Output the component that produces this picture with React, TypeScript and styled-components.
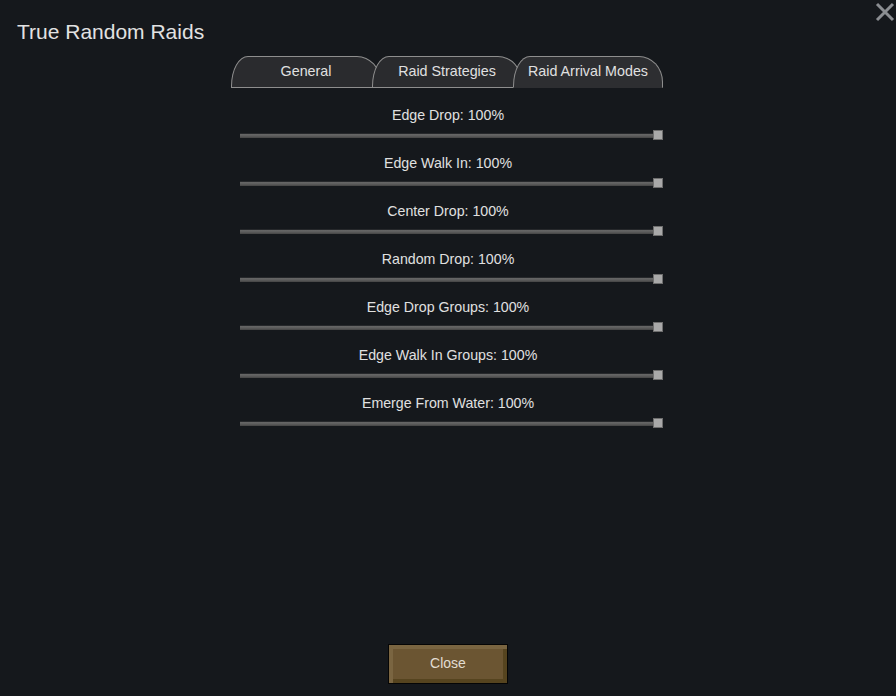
import styled, { createGlobalStyle } from 'styled-components';

const GlobalStyle = createGlobalStyle`
  html, body {
    margin: 0;
    padding: 0;
    background: #15181c;
  }
  body {
    font-family: "Liberation Sans", Arial, sans-serif;
    color: #dedede;
  }
`;

const modes = [
  'Edge Drop',
  'Edge Walk In',
  'Center Drop',
  'Random Drop',
  'Edge Drop Groups',
  'Edge Walk In Groups',
  'Emerge From Water',
];

const tabs = ['General', 'Raid Strategies', 'Raid Arrival Modes'];

export default function App() {
  return (
    <>
      <GlobalStyle />
      <Window>
        <Header>
          <Title>True Random Raids</Title>
          <CloseIcon aria-label="close">
            <svg width="20" height="20" viewBox="0 0 20 20">
              <path d="M2 2 L18 18 M18 2 L2 18" stroke="#8b8e92" strokeWidth="3" />
            </svg>
          </CloseIcon>
        </Header>

        <TabBar>
          {tabs.map((t, i) => (
            <Tab key={t} $active={i === tabs.length - 1} $index={i}>
              {t}
            </Tab>
          ))}
        </TabBar>

        <SliderList>
          {modes.map((m) => (
            <SliderRow key={m}>
              <SliderLabel>{m}: 100%</SliderLabel>
              <SliderArea>
                <Track>
                  <Thumb style={{ left: '100%' }} />
                </Track>
              </SliderArea>
            </SliderRow>
          ))}
        </SliderList>

        <Footer>
          <CloseButton>Close</CloseButton>
        </Footer>
      </Window>
    </>
  );
}

const Window = styled.div`
  width: 896px;
  height: 696px;
  display: flex;
  flex-direction: column;
  box-sizing: border-box;
  overflow: hidden;
`;

const Header = styled.div`
  display: flex;
  justify-content: space-between;
  align-items: flex-start;
  height: 56px;
`;

const Title = styled.h1`
  margin: 20px 0 0 17px;
  font-size: 21px;
  font-weight: normal;
  line-height: 24px;
  color: #e2e2e2;
`;

const CloseIcon = styled.div`
  width: 20px;
  height: 20px;
  margin: 2px 1px 0 0;
`;

const TabBar = styled.div`
  display: flex;
  justify-content: center;
  height: 32px;
  padding-right: 2px;
`;

const Tab = styled.div<{ $active: boolean; $index: number }>`
  position: relative;
  z-index: ${(p) => p.$index + 1};
  width: 150px;
  height: 32px;
  box-sizing: border-box;
  margin-left: ${(p) => (p.$index === 0 ? '0' : '-9px')};
  background: ${(p) => (p.$active ? '#2d2e31' : '#2a2b2e')};
  border: 1px solid #8e8e8e;
  border-bottom: ${(p) => (p.$active ? '1px solid #2d2e31' : '1px solid #8e8e8e')};
  border-radius: 17px 24px 0 0 / 30px 26px 0 0;
  display: flex;
  align-items: center;
  justify-content: center;
  padding-bottom: 3px;
  font-size: 14.3px;
  color: #e0e0e0;
`;

const SliderList = styled.div`
  width: 432px;
  margin: 17px auto 0;
  display: flex;
  flex-direction: column;
`;

const SliderRow = styled.div`
  display: flex;
  flex-direction: column;
  height: 48px;
`;

const SliderLabel = styled.div`
  height: 20px;
  line-height: 20px;
  text-align: center;
  font-size: 14.2px;
  color: #e0e0e0;
`;

const SliderArea = styled.div`
  height: 28px;
  padding: 8px 6px 0 8px;
  box-sizing: border-box;
`;

const Track = styled.div`
  position: relative;
  height: 5px;
  box-sizing: border-box;
  border-top: 1px solid #26282b;
  background: linear-gradient(#676767 0, #5c5c5c 50%, #444 100%);
`;

const Thumb = styled.div`
  position: absolute;
  top: -4px;
  width: 10px;
  height: 10px;
  transform: translateX(-5px);
  box-sizing: border-box;
  background: #a9a9a9;
  border: 1px solid #6e6e6e;
`;

const Footer = styled.div`
  margin-top: auto;
  display: flex;
  justify-content: center;
  padding: 0 0 12px;
`;

const CloseButton = styled.button`
  width: 120px;
  height: 40px;
  box-sizing: border-box;
  background: #6b5532;
  border: 1px solid #050505;
  box-shadow:
    inset 4px 4px 0 #7a6541,
    inset -4px -4px 0 #56441f;
  font-family: "Liberation Sans", Arial, sans-serif;
  font-size: 14px;
  color: #e2ddd2;
  padding: 0 0 2px;
`;
